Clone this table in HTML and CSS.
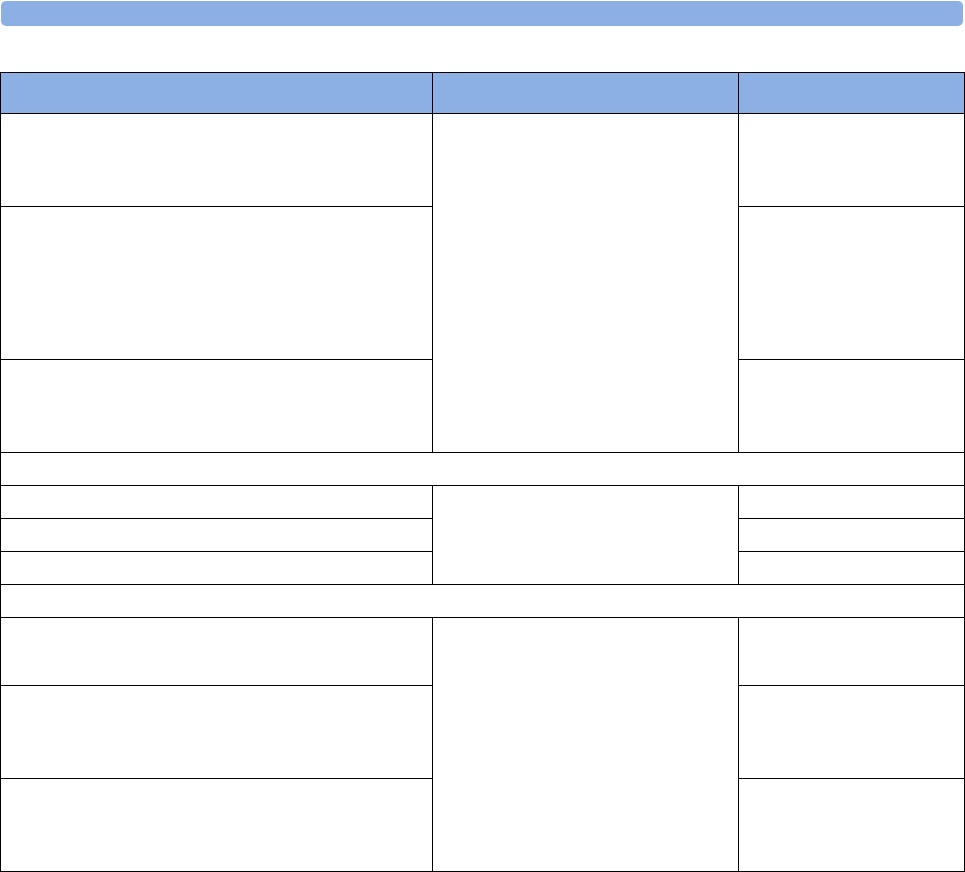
FILE: index.html
```html
<!DOCTYPE html>
<html>
<head>
<meta charset="utf-8">
<link rel="stylesheet" href="styles.css">
</head>
<body>
<div class="titlebar"></div>
<table class="grid">
  <colgroup>
    <col class="c1">
    <col class="c2">
    <col class="c3">
  </colgroup>
  <thead>
    <tr class="h-head"><th></th><th></th><th></th></tr>
  </thead>
  <tbody>
    <tr class="h93"><td></td><td rowspan="3"></td><td></td></tr>
    <tr class="h153"><td></td><td></td></tr>
    <tr class="h93"><td></td><td></td></tr>
    <tr class="h33"><td colspan="3"></td></tr>
    <tr class="h33"><td></td><td rowspan="3"></td><td></td></tr>
    <tr class="h33"><td></td><td></td></tr>
    <tr class="h33"><td></td><td></td></tr>
    <tr class="h33"><td colspan="3"></td></tr>
    <tr class="h68"><td></td><td rowspan="3"></td><td></td></tr>
    <tr class="h93"><td></td><td></td></tr>
    <tr class="h93"><td></td><td></td></tr>
  </tbody>
</table>
</body>
</html>
```
FILE: styles.css
```css
html, body {
  margin: 0;
  padding: 0;
  background: #ffffff;
  font-family: "Liberation Sans", Arial, sans-serif;
}
.titlebar {
  margin: 1px 0 0 1px;
  width: 962px;
  height: 25px;
  background: #8db0e4;
  border-radius: 5px;
}
.grid {
  margin-top: 46px;
  border-collapse: collapse;
  table-layout: fixed;
  width: 964px;
}
.c1 { width: 432px; }
.c2 { width: 306px; }
.c3 { width: 226px; }
.grid th, .grid td {
  border: 1px solid #000000;
  padding: 0;
}
.grid th {
  background: #8db0e4;
}
.h-head { height: 41px; }
.h93 { height: 93px; }
.h153 { height: 153px; }
.h33 { height: 33px; }
.h68 { height: 68px; }
```
